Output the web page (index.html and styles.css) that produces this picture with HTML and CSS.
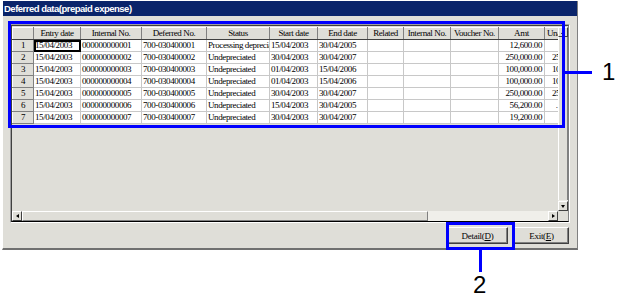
FILE: index.html
```html
<!DOCTYPE html>
<html lang="en">
<head>
    <meta charset="UTF-8">
    <title>Deferred data(prepaid expense)</title>
    <link rel="stylesheet" href="styles.css">
</head>
<body>

    <div class="window">
        <div class="titlebar">Deferred data(prepaid expense)</div>

        <div class="content">
            <!-- grid -->
            <div class="grid">
                <div class="grid-inner">
                    <div class="grid-main">
                        <div class="cells">
                            <table class="sheet">
                                <colgroup>
                                    <col style="width:21px"><col style="width:47px"><col style="width:61px">
                                    <col style="width:65px"><col style="width:63px"><col style="width:48px">
                                    <col style="width:50px"><col style="width:36px"><col style="width:47px">
                                    <col style="width:48px"><col style="width:46px"><col style="width:52px">
                                </colgroup>
                                <tr class="head">
                                    <th></th><th>Entry date</th><th>Internal No.</th><th>Deferred No.</th>
                                    <th>Status</th><th>Start date</th><th>End date</th><th>Related</th>
                                    <th>Internal No.</th><th>Voucher No.</th><th>Amt</th><th class="left">Unamortized</th>
                                </tr>
                                <tr>
                                    <th>1</th><td class="focus">15/04/2003</td><td>000000000001</td><td>700-030400001</td>
                                    <td>Processing depreciation</td><td>15/04/2003</td><td>30/04/2005</td><td></td>
                                    <td></td><td></td><td class="num">12,600.00</td><td class="un"></td>
                                </tr>
                                <tr>
                                    <th>2</th><td>15/04/2003</td><td>000000000002</td><td>700-030400002</td>
                                    <td>Undepreciated</td><td>30/04/2003</td><td>30/04/2007</td><td></td>
                                    <td></td><td></td><td class="num">250,000.00</td><td class="un">250,000.00</td>
                                </tr>
                                <tr>
                                    <th>3</th><td>15/04/2003</td><td>000000000003</td><td>700-030400003</td>
                                    <td>Undepreciated</td><td>01/04/2003</td><td>15/04/2006</td><td></td>
                                    <td></td><td></td><td class="num">100,000.00</td><td class="un">100,000.00</td>
                                </tr>
                                <tr>
                                    <th>4</th><td>15/04/2003</td><td>000000000004</td><td>700-030400004</td>
                                    <td>Undepreciated</td><td>01/04/2003</td><td>15/04/2006</td><td></td>
                                    <td></td><td></td><td class="num">100,000.00</td><td class="un">100,000.00</td>
                                </tr>
                                <tr>
                                    <th>5</th><td>15/04/2003</td><td>000000000005</td><td>700-030400005</td>
                                    <td>Undepreciated</td><td>30/04/2003</td><td>30/04/2007</td><td></td>
                                    <td></td><td></td><td class="num">250,000.00</td><td class="un">250,000.00</td>
                                </tr>
                                <tr>
                                    <th>6</th><td>15/04/2003</td><td>000000000006</td><td>700-030400006</td>
                                    <td>Undepreciated</td><td>15/04/2003</td><td>30/04/2005</td><td></td>
                                    <td></td><td></td><td class="num">56,200.00</td><td class="un">&nbsp;&nbsp;.</td>
                                </tr>
                                <tr>
                                    <th>7</th><td>15/04/2003</td><td>000000000007</td><td>700-030400007</td>
                                    <td>Undepreciated</td><td>30/04/2003</td><td>30/04/2007</td><td></td>
                                    <td></td><td></td><td class="num">19,200.00</td><td class="un"></td>
                                </tr>
                            </table>
                        </div>
                        <div class="vscroll">
                            <div class="sbtn"><span class="arrow up"></span></div>
                            <div class="vthumb"></div>
                            <div class="sbtn"><span class="arrow down"></span></div>
                        </div>
                    </div>
                    <div class="hscroll-row">
                        <div class="hscroll">
                            <div class="sbtn"><span class="arrow left"></span></div>
                            <div class="hthumb"></div>
                            <div class="htrack"></div>
                            <div class="sbtn"><span class="arrow right"></span></div>
                        </div>
                        <div class="corner"></div>
                    </div>
                </div>
            </div>

            <!-- buttons -->
            <div class="actions">
                <button class="btn btn-detail">Detail(<u>D</u>)</button>
                <button class="btn btn-exit">Exit(<u>E</u>)</button>
            </div>
        </div>
    </div>

    <!-- callouts -->
    <div class="callout-box box-1"></div>
    <div class="callout-line line-1"></div>
    <div class="callout-num num-1">1</div>

    <div class="callout-box box-2"></div>
    <div class="callout-line line-2"></div>
    <div class="callout-num num-2">2</div>

</body>
</html>
```

FILE: styles.css
```css
body {
    margin: 0;
    padding: 0;
    background: #ffffff;
    font-family: 'Liberation Serif', serif;
    position: relative;
    width: 627px;
    height: 303px;
    overflow: hidden;
}

/* window */
.window {
    margin: 1px 0 0 2px;
    width: 576px;
    height: 249px;
    box-sizing: border-box;
    background: #dfded8;
    border-right: 1px solid #808080;
    border-bottom: 2px solid #707070;
    border-left: 1px solid #ffffff;
    display: flex;
    flex-direction: column;
}

.titlebar {
    height: 15px;
    background: #0a246a;
    color: #ffffff;
    font-family: 'Liberation Sans', sans-serif;
    font-weight: bold;
    font-size: 9.5px;
    line-height: 15px;
    padding-left: 1px;
    letter-spacing: -0.5px;
    white-space: nowrap;
}

.content {
    padding: 8px 7px 0 7px;
    display: flex;
    flex-direction: column;
}

/* grid */
.grid {
    height: 199px;
    box-sizing: border-box;
    border-top: 1px solid #a0a0a0;
    border-left: 1px solid #a0a0a0;
    border-right: 1px solid #ffffff;
    border-bottom: 1px solid #ffffff;
}

.grid-inner {
    height: 100%;
    box-sizing: border-box;
    border-top: 1px solid #404040;
    border-left: 1px solid #404040;
    border-right: 1px solid #808080;
    border-bottom: 1px solid #000000;
    display: flex;
    flex-direction: column;
    padding-top: 1px;
}

.grid-main {
    flex: 1;
    display: flex;
    min-height: 0;
}

.cells {
    flex: 1;
    overflow: hidden;
    background: #dfded8;
}

.sheet {
    table-layout: fixed;
    border-collapse: collapse;
    width: 584px;
    font-size: 9px;
    letter-spacing: -0.4px;
}

.sheet th, .sheet td {
    height: 11px;
    padding: 0 1px;
    line-height: 11px;
    white-space: nowrap;
    overflow: hidden;
    font-weight: normal;
    color: #000000;
}

.sheet td {
    background: #ffffff;
    border-right: 1px solid #c8c8c8;
    border-bottom: 1px solid #c8c8c8;
    text-align: left;
}

.sheet th {
    background: #dfded8;
    text-align: center;
    border-top: 1px solid #ffffff;
    border-left: 1px solid #ffffff;
    border-right: 1px solid #808080;
    border-bottom: 1px solid #808080;
}

.sheet .head th {
    height: 10px;
    border-bottom: 1px solid #404040;
}

.sheet .head th.left {
    text-align: left;
    padding-left: 2px;
}

.sheet td.num {
    text-align: right;
    padding-right: 2px;
}

.sheet td.un {
    padding-left: 7px;
}

.sheet td.focus {
    outline: 2px solid #000000;
    outline-offset: -2px;
}

/* scrollbars */
.vscroll {
    width: 10px;
    display: flex;
    flex-direction: column;
    background: #eeede8;
}

.hscroll-row {
    height: 10px;
    display: flex;
}

.hscroll {
    flex: 1;
    display: flex;
}

.sbtn {
    width: 8px;
    height: 8px;
    flex: none;
    background: #dfded8;
    border-top: 1px solid #ffffff;
    border-left: 1px solid #ffffff;
    border-right: 1px solid #404040;
    border-bottom: 1px solid #404040;
    display: flex;
    align-items: center;
    justify-content: center;
}

.vthumb {
    flex: 1;
    background: #dfded8;
    border-left: 1px solid #ffffff;
    border-right: 1px solid #808080;
    margin-bottom: 1px;
}

.hthumb {
    width: 404px;
    background: #dfded8;
    border-top: 1px solid #ffffff;
    border-left: 1px solid #ffffff;
    border-right: 1px solid #808080;
    border-bottom: 1px solid #808080;
}

.htrack {
    flex: 1;
    background: #f0efea;
}

.corner {
    width: 10px;
    background: #dfded8;
}

.arrow {
    width: 0;
    height: 0;
    border: 2px solid transparent;
}

.arrow.up { border-bottom: 3px solid #000; border-top: 0; }
.arrow.down { border-top: 3px solid #000; border-bottom: 0; }
.arrow.left { border-right: 3px solid #000; border-left: 0; }
.arrow.right { border-left: 3px solid #000; border-right: 0; }

/* buttons */
.actions {
    display: flex;
    justify-content: flex-end;
    gap: 6px;
    padding-top: 4px;
    padding-right: 1px;
}

.btn {
    height: 17px;
    padding: 0;
    background: #dfded8;
    font-family: 'Liberation Serif', serif;
    font-size: 9px;
    letter-spacing: -0.3px;
    color: #000000;
    border-top: 1px solid #ffffff;
    border-left: 1px solid #ffffff;
    border-right: 1px solid #404040;
    border-bottom: 1px solid #404040;
    box-shadow: inset -1px -1px 0 #808080;
}

.btn-detail { width: 61px; }
.btn-exit { width: 55px; }

/* callouts */
.callout-box {
    position: absolute;
    border: 3px solid #0000ff;
    box-sizing: border-box;
}

.box-1 { left: 8px; top: 21px; width: 557px; height: 107px; }
.box-2 { left: 446px; top: 222px; width: 69px; height: 28px; }

.callout-line {
    position: absolute;
    background: #0000ff;
}

.line-1 { left: 565px; top: 71px; width: 27px; height: 3px; }
.line-2 { left: 479px; top: 250px; width: 3px; height: 22px; }

.callout-num {
    position: absolute;
    font-family: 'Liberation Sans', sans-serif;
    font-size: 24px;
    line-height: 24px;
    color: #000000;
}

.num-1 { left: 602px; top: 60px; }
.num-2 { left: 473px; top: 273px; }
```
